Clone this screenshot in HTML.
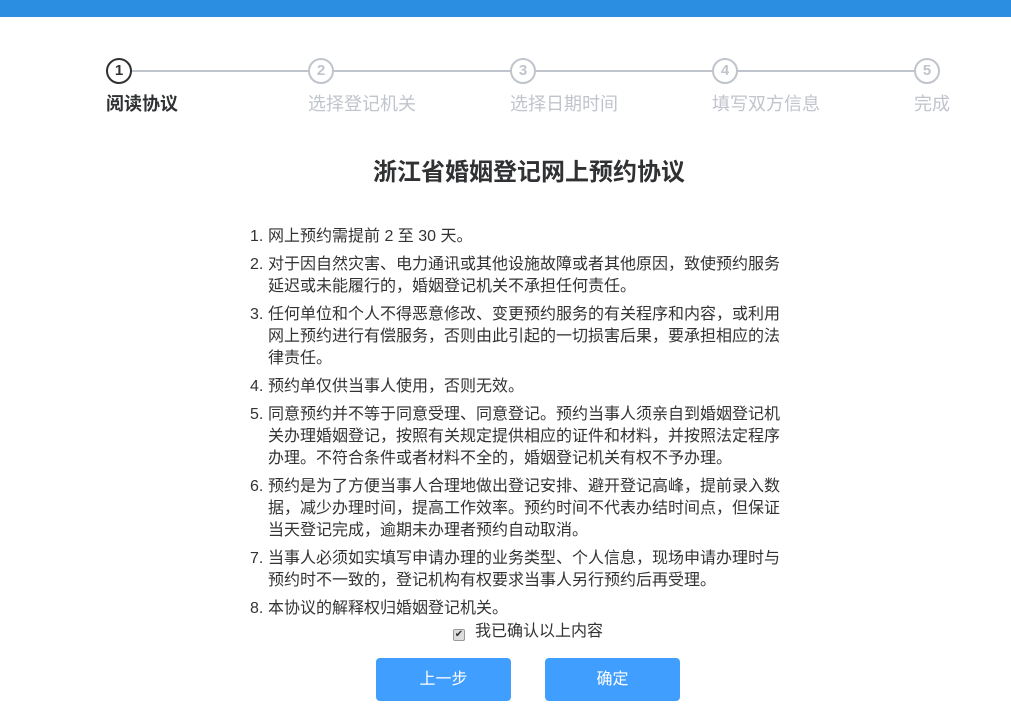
<!DOCTYPE html>
<html><head><meta charset="utf-8"><style>
*{margin:0;padding:0;box-sizing:border-box}
body{width:1011px;height:712px;background:#fff;font-family:"Liberation Sans","Noto Sans CJK SC",sans-serif;color:#333;position:relative;overflow:hidden}
.bar{position:absolute;left:0;top:0;width:1011px;height:17px;background:#2b8ee0}
.line{position:absolute;top:70px;height:2px;background:#c0c4cc;left:131px;width:784px}
.c{position:absolute;top:58px;width:26px;height:26px;border:2px solid #c0c4cc;border-radius:50%;background:#fff;color:#c0c4cc;font-size:15px;font-weight:bold;text-align:center;line-height:22px}
.c.a{border-color:#303133;color:#303133}
.l{position:absolute;top:93px;font-size:18px;color:#c0c4cc;white-space:nowrap;line-height:22px}
.l.a{color:#303133;font-weight:bold}
h1{position:absolute;top:158px;left:373px;font-size:24px;font-weight:bold;color:#303133;line-height:30px;white-space:nowrap}
.list{position:absolute;left:250px;top:226px;font-size:16px;line-height:22px;color:#333}
.it{position:relative;padding-left:18px;margin-bottom:6px;white-space:nowrap}
.it span{position:absolute;left:0;top:0}
.chk{position:absolute;top:623px;left:453px;font-size:16px;white-space:nowrap;line-height:18px}
.chk i{display:inline-block;width:12px;height:12px;border:1px solid #999;background:#ddd;border-radius:2px;vertical-align:-1px;margin-right:10px;font-style:normal;font-size:10px;line-height:10px;text-align:center;color:#333}
.btn{position:absolute;top:658px;width:135px;height:43px;background:#409eff;border-radius:4px;color:#fff;font-size:16px;text-align:center;line-height:43px}
</style></head><body>
<div class="bar"></div>
<div class="line"></div>
<div class="c a" style="left:106px">1</div>
<div class="c" style="left:308px">2</div>
<div class="c" style="left:510px">3</div>
<div class="c" style="left:712px">4</div>
<div class="c" style="left:914px">5</div>
<div class="l a" style="left:106px">阅读协议</div>
<div class="l" style="left:308px">选择登记机关</div>
<div class="l" style="left:510px">选择日期时间</div>
<div class="l" style="left:712px">填写双方信息</div>
<div class="l" style="left:914px">完成</div>
<h1>浙江省婚姻登记网上预约协议</h1>
<div class="list">
<div class="it"><span>1.</span>网上预约需提前 2 至 30 天。</div>
<div class="it"><span>2.</span>对于因自然灾害、电力通讯或其他设施故障或者其他原因，致使预约服务<br>延迟或未能履行的，婚姻登记机关不承担任何责任。</div>
<div class="it"><span>3.</span>任何单位和个人不得恶意修改、变更预约服务的有关程序和内容，或利用<br>网上预约进行有偿服务，否则由此引起的一切损害后果，要承担相应的法<br>律责任。</div>
<div class="it"><span>4.</span>预约单仅供当事人使用，否则无效。</div>
<div class="it"><span>5.</span>同意预约并不等于同意受理、同意登记。预约当事人须亲自到婚姻登记机<br>关办理婚姻登记，按照有关规定提供相应的证件和材料，并按照法定程序<br>办理。不符合条件或者材料不全的，婚姻登记机关有权不予办理。</div>
<div class="it"><span>6.</span>预约是为了方便当事人合理地做出登记安排、避开登记高峰，提前录入数<br>据，减少办理时间，提高工作效率。预约时间不代表办结时间点，但保证<br>当天登记完成，逾期未办理者预约自动取消。</div>
<div class="it"><span>7.</span>当事人必须如实填写申请办理的业务类型、个人信息，现场申请办理时与<br>预约时不一致的，登记机构有权要求当事人另行预约后再受理。</div>
<div class="it"><span>8.</span>本协议的解释权归婚姻登记机关。</div>
</div>
<div class="chk"><i>✔</i>我已确认以上内容</div>
<div class="btn" style="left:376px">上一步</div>
<div class="btn" style="left:545px">确定</div>
</body></html>
